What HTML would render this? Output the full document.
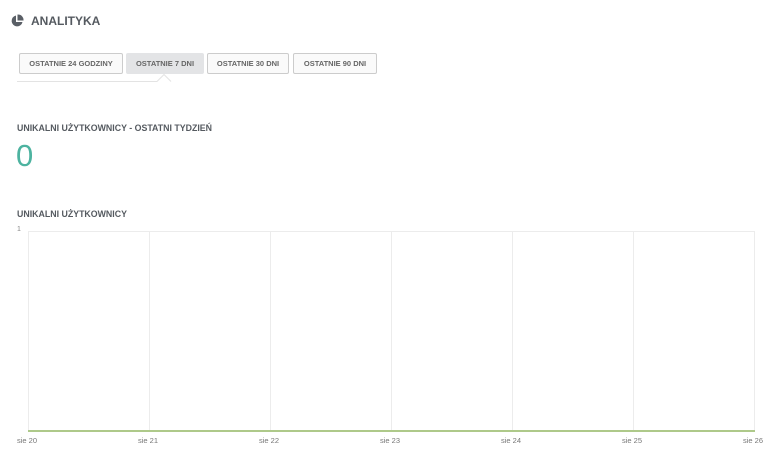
<!DOCTYPE html><html><head><style>
body{margin:0;width:777px;height:454px;background:#fff;font-family:"Liberation Sans",sans-serif;color:#555a60;position:relative;overflow:hidden}
.a{position:absolute}
.btn{position:absolute;top:53px;height:19px;border:1px solid #ccc;border-radius:2px;font-size:7.5px;font-weight:bold;line-height:19px;text-align:center;color:#666;background:#fafafa}
.vl{position:absolute;top:231px;height:200px;width:1px;background:#ececec}
.lb{position:absolute;top:436px;font-size:7.5px;color:#777}
</style></head><body>
<svg class="a" style="left:10px;top:14px" width="14" height="14" viewBox="0 0 14 14"><path d="M6 1.5A5.5 5.5 0 1 0 12.5 8H6Z" fill="#5a5f66"/><path d="M7.5 0.5A5.5 5.5 0 0 1 13.5 6.5H7.5Z" fill="#5a5f66"/></svg>
<div class="a" style="left:31px;top:14px;font-size:12px;font-weight:bold;color:#555a60">ANALITYKA</div>
<div class="btn" style="left:19px;width:102px">OSTATNIE 24 GODZINY</div>
<div class="btn" style="left:126px;width:76px;background:#e3e4e6;border-color:#e3e4e6">OSTATNIE 7 DNI</div>
<div class="btn" style="left:207px;width:80px">OSTATNIE 30 DNI</div>
<div class="btn" style="left:293px;width:82px">OSTATNIE 90 DNI</div>
<div class="a" style="left:17px;top:81px;width:140px;height:1px;background:#e3e3e3"></div>
<svg class="a" style="left:156px;top:74px" width="16" height="9"><path d="M0 7.5H1L8 0.5L15 7.5" fill="none" stroke="#e3e3e3"/></svg>
<div class="a" style="left:17px;top:123px;font-size:8.8px;font-weight:bold">UNIKALNI UŻYTKOWNICY - OSTATNI TYDZIEŃ</div>
<div class="a" style="left:16px;top:138px;font-size:31px;color:#4db3a0">0</div>
<div class="a" style="left:17px;top:209px;font-size:8.8px;font-weight:bold">UNIKALNI UŻYTKOWNICY</div>
<div class="a" style="left:17px;top:226px;font-size:7px;color:#888">1</div>
<div class="a" style="left:28px;top:231px;width:727px;height:1px;background:#ececec"></div>
<div class="vl" style="left:28px"></div><div class="vl" style="left:149px"></div><div class="vl" style="left:270px"></div><div class="vl" style="left:391px"></div><div class="vl" style="left:512px"></div><div class="vl" style="left:633px"></div><div class="vl" style="left:754px"></div>
<div class="a" style="left:28px;top:430px;width:727px;height:2px;background:#aec98a"></div>
<div class="lb" style="left:17px">sie 20</div><div class="lb" style="left:138px">sie 21</div><div class="lb" style="left:259px">sie 22</div><div class="lb" style="left:380px">sie 23</div><div class="lb" style="left:501px">sie 24</div><div class="lb" style="left:622px">sie 25</div><div class="lb" style="left:743px">sie 26</div>
</body></html>
